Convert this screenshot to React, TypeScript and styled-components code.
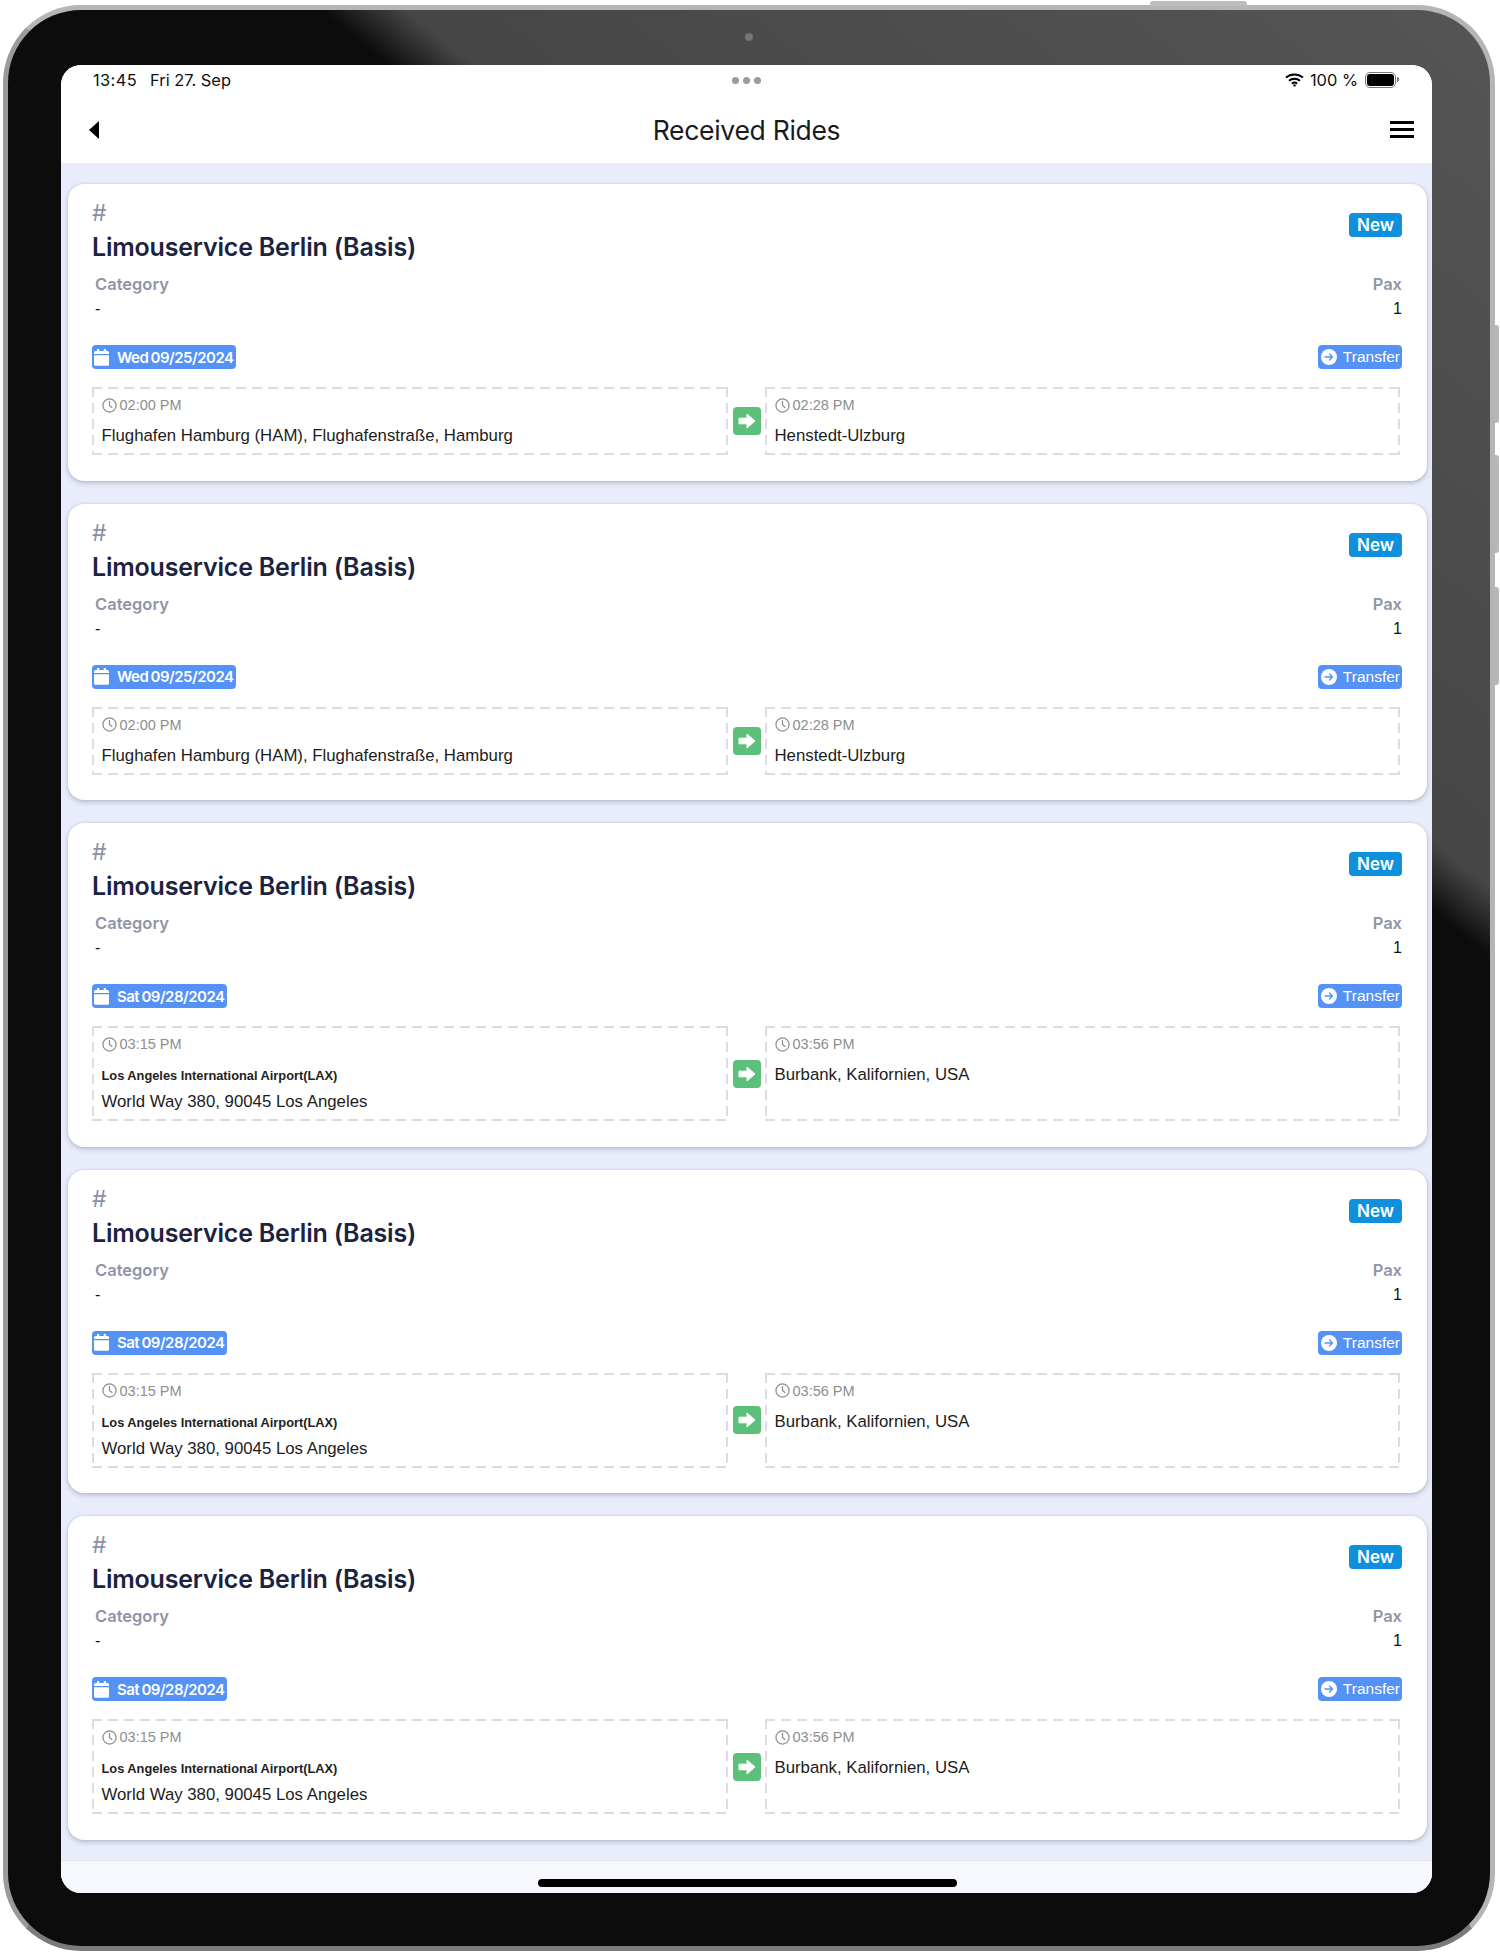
import React from "react";
import styled, { createGlobalStyle } from "styled-components";

const GlobalStyle = createGlobalStyle`
  html, body {
    margin: 0;
    padding: 0;
    background: #ffffff;
  }
  body {
    font-family: "Liberation Sans", Arial, sans-serif;
    color: #111111;
  }
`;

type Ride = {
  date: string;
  fromTime: string;
  toTime: string;
  fromName?: string;
  fromAddress: string;
  to: string;
};

const hamburg: Ride = {
  date: "Wed 09/25/2024",
  fromTime: "02:00 PM",
  toTime: "02:28 PM",
  fromAddress: "Flughafen Hamburg (HAM), Flughafenstraße, Hamburg",
  to: "Henstedt-Ulzburg",
};

const losAngeles: Ride = {
  date: "Sat 09/28/2024",
  fromTime: "03:15 PM",
  toTime: "03:56 PM",
  fromName: "Los Angeles International Airport(LAX)",
  fromAddress: "World Way 380, 90045 Los Angeles",
  to: "Burbank, Kalifornien, USA",
};

const rides: Ride[] = [hamburg, hamburg, losAngeles, losAngeles, losAngeles];

const ClockIcon = () => (
  <svg width="15" height="15" viewBox="0 0 24 24" fill="none" stroke="#8d8d8d" strokeWidth="2" strokeLinecap="round" strokeLinejoin="round">
    <circle cx="12" cy="12" r="10.5" />
    <path d="M12 5.5V12l4 3" />
  </svg>
);

const CalendarIcon = () => (
  <svg width="15" height="17" viewBox="0 0 15 17" fill="#ffffff">
    <rect x="3" y="0" width="2.2" height="3.5" rx="0.6" />
    <rect x="9.8" y="0" width="2.2" height="3.5" rx="0.6" />
    <path d="M1.5 2H13.5A1.5 1.5 0 0 1 15 3.5V5H0V3.5A1.5 1.5 0 0 1 1.5 2Z" />
    <path d="M0 6.2H15V15.2A1.5 1.5 0 0 1 13.5 16.7H1.5A1.5 1.5 0 0 1 0 15.2Z" />
  </svg>
);

const TransferIcon = () => (
  <svg width="16" height="16" viewBox="0 0 16 16">
    <circle cx="8" cy="8" r="8" fill="#ffffff" />
    <path d="M4 8H11.5M8.5 5L11.5 8L8.5 11" fill="none" stroke="#5592f5" strokeWidth="1.3" strokeLinecap="round" strokeLinejoin="round" />
  </svg>
);

const WifiIcon = () => (
  <svg width="19" height="14" viewBox="0 0 19 14" fill="none" stroke="#000000" strokeWidth="2" strokeLinecap="butt">
    <path d="M1 4.6C5.8 0.4 13.2 0.4 18 4.6" />
    <path d="M4 7.8C7.2 5 11.8 5 15 7.8" />
    <path d="M6.9 10.6C8.4 9.4 10.6 9.4 12.1 10.6" />
    <circle cx="9.5" cy="12.4" r="1.2" fill="#000000" stroke="none" />
  </svg>
);

const Page = styled.div`
  width: 1500px;
  height: 1953px;
  box-sizing: border-box;
  padding: 5px 5px 2px 3px;
  overflow: hidden;
`;

const Device = styled.div`
  position: relative;
  width: 100%;
  height: 100%;
  box-sizing: border-box;
  padding: 55px 58px 53px 53px;
  border: 5px solid #b5b5b5;
  border-bottom-color: #7b7b7b;
  border-left-color: #9a9a9a;
  border-radius: 78px;
  background: linear-gradient(39deg, #0c0c0c 69.8%, #464646 72%, #555555 100%);
`;

const TopButton = styled.div`
  position: absolute;
  top: -9px;
  right: 243px;
  width: 97px;
  height: 5px;
  border-radius: 3px 3px 0 0;
  background: #bdbdbd;
`;

const SideButton = styled.div<{ $top: number }>`
  position: absolute;
  top: ${(p) => p.$top}px;
  right: -9px;
  width: 4px;
  height: 98px;
  border-radius: 0 3px 3px 0;
  background: #b8b8b8;
`;

const Camera = styled.div`
  position: absolute;
  top: 23px;
  left: 737px;
  width: 8px;
  height: 8px;
  border-radius: 50%;
  background: #73737c;
`;

const Screen = styled.div`
  display: flex;
  flex-direction: column;
  height: 100%;
  border-radius: 20px;
  overflow: hidden;
  background: #e9ecfa;
`;

const StatusBar = styled.div`
  display: grid;
  grid-template-columns: 1fr auto 1fr;
  align-items: center;
  height: 30px;
  padding: 0 33px 0 32px;
  background: #ffffff;
  font-family: "Inter", sans-serif;
  font-size: 16.4px;
  color: #111111;
`;

const StatusLeft = styled.div`
  display: flex;
  gap: 13px;
`;

const StatusClock = styled.span`
  letter-spacing: 0.4px;
`;

const StatusDots = styled.div`
  display: flex;
  gap: 4px;
`;

const Dot = styled.span`
  width: 7px;
  height: 7px;
  border-radius: 50%;
  background: #9a9a9e;
`;

const StatusRight = styled.div`
  display: flex;
  justify-content: flex-end;
  align-items: center;
  gap: 6px;
`;

const Battery = styled.div`
  position: relative;
  width: 27px;
  height: 12px;
  margin-left: 1px;
  margin-right: 3px;
  padding: 1px;
  box-sizing: content-box;
  border: 1px solid #777777;
  border-radius: 5px;
  &::before {
    content: "";
    display: block;
    height: 100%;
    border-radius: 3px;
    background: #000000;
  }
  &::after {
    content: "";
    position: absolute;
    top: 4px;
    right: -4px;
    width: 2px;
    height: 5px;
    border-radius: 0 2px 2px 0;
    background: #777777;
  }
`;

const NavBar = styled.div`
  display: grid;
  grid-template-columns: 1fr auto 1fr;
  align-items: center;
  height: 68px;
  box-sizing: border-box;
  padding: 1px 18px 0 18px;
  background: #ffffff;
`;

const BackIcon = styled.div`
  width: 0;
  height: 0;
  margin-left: 10px;
  border-style: solid;
  border-width: 9.5px 10px 9.5px 0;
  border-color: transparent #000000 transparent transparent;
`;

const NavTitle = styled.h1`
  margin: 0;
  font-family: "Inter", sans-serif;
  font-size: 26.5px;
  font-weight: 400;
  letter-spacing: -0.3px;
  color: #1a1a1f;
`;

const Burger = styled.div`
  justify-self: end;
  width: 24px;
  height: 17px;
  border-top: 3px solid #000000;
  border-bottom: 3px solid #000000;
  box-sizing: border-box;
  position: relative;
  &::after {
    content: "";
    position: absolute;
    top: 4px;
    left: 0;
    right: 0;
    height: 3px;
    background: #000000;
  }
`;

const List = styled.div`
  flex: 1;
  display: flex;
  flex-direction: column;
  gap: 23px;
  padding: 21px 5px 0 7px;
  overflow: hidden;
`;

const Card = styled.div`
  flex: none;
  box-sizing: border-box;
  padding: 16px 25px 25.5px 24px;
  border-radius: 16px;
  background: #ffffff;
  box-shadow: 0 2px 5px rgba(90, 95, 130, 0.35), 0 0 2px rgba(90, 95, 130, 0.18);
`;

const Footer = styled.div`
  flex: none;
  height: 32px;
  position: relative;
  background: #f7f8fd;
  box-shadow: 0 -1px 0 #e4e5ee;
`;

const HomeBar = styled.div`
  position: absolute;
  left: 477px;
  bottom: 6px;
  width: 419px;
  height: 8px;
  border-radius: 4px;
  background: #000000;
`;

const HeadRow = styled.div`
  display: flex;
  justify-content: space-between;
  align-items: flex-start;
`;

const Hash = styled.div`
  font-family: "Inter", sans-serif;
  font-size: 23px;
  line-height: 26px;
  color: #8d90a8;
`;

const Title = styled.div`
  margin-top: 5px;
  font-family: "Inter", sans-serif;
  font-size: 25px;
  line-height: 33px;
  font-weight: 600;
  letter-spacing: -0.2px;
  color: #1b2340;
`;

const NewBadge = styled.div`
  margin-top: 13px;
  padding: 0 8px;
  height: 24px;
  line-height: 24px;
  border-radius: 4px;
  background: #0f90dc;
  color: #ffffff;
  font-family: "Inter", sans-serif;
  font-size: 17px;
  font-weight: 600;
`;

const MetaRow = styled.div`
  display: flex;
  justify-content: space-between;
  margin-top: 10px;
  padding-left: 3px;
`;

const MetaColumn = styled.div<{ $end?: boolean }>`
  display: flex;
  flex-direction: column;
  gap: 3px;
  align-items: ${(p) => (p.$end ? "flex-end" : "flex-start")};
`;

const MetaLabel = styled.div`
  font-family: "Inter", sans-serif;
  font-size: 16.5px;
  line-height: 21px;
  font-weight: 600;
  color: #9194a8;
`;

const MetaValue = styled.div`
  font-size: 16px;
  line-height: 21px;
  color: #111111;
`;

const TagRow = styled.div`
  display: flex;
  justify-content: space-between;
  margin-top: 26px;
`;

const Tag = styled.div`
  display: flex;
  align-items: center;
  height: 24px;
  padding: 0 2px 0 3px;
  gap: 6px;
  border-radius: 4px;
  background: #5592f5;
  color: #ffffff;
  font-size: 15.5px;
`;

const DateTag = styled(Tag)`
  padding: 0 2px 0 2px;
  gap: 8px;
  font-family: "Inter", sans-serif;
  font-size: 15px;
  font-weight: 600;
  letter-spacing: -0.5px;
  word-spacing: -1px;
`;

const RouteRow = styled.div`
  display: grid;
  grid-template-columns: 636px 37px 1fr;
  margin-top: 18px;
  padding-right: 2px;
`;

const Stop = styled.div`
  min-height: 68px;
  box-sizing: border-box;
  padding: 9px 9px 9px 9.5px;
  background-image: linear-gradient(to right, #dcdce2 10px, transparent 10px),
    linear-gradient(to right, #dcdce2 10px, transparent 10px),
    linear-gradient(to bottom, #dcdce2 10px, transparent 10px),
    linear-gradient(to bottom, #dcdce2 10px, transparent 10px);
  background-size: 16px 2px, 16px 2px, 2px 16px, 2px 16px;
  background-position: 0 0, 0 100%, 0 0, 100% 0;
  background-repeat: repeat-x, repeat-x, repeat-y, repeat-y;
`;

const StopTime = styled.div`
  display: flex;
  align-items: center;
  gap: 3px;
  height: 18px;
  font-size: 14.5px;
  color: #8d8d8d;
`;

const StopName = styled.div`
  margin-top: 14px;
  font-size: 12.8px;
  line-height: 18px;
  font-weight: 700;
  color: #222222;
`;

const StopAddress = styled.div<{ $tight?: boolean }>`
  margin-top: ${(p) => (p.$tight ? 6 : 11)}px;
  font-size: 16.8px;
  line-height: 21px;
  color: #1c1c1c;
`;

const ArrowCell = styled.div`
  display: flex;
  align-items: center;
  justify-content: center;
`;

const ArrowBox = styled.div`
  display: flex;
  align-items: center;
  justify-content: center;
  width: 28px;
  height: 28px;
  border-radius: 4px;
  background: #5cc07a;
`;

const RideCard = ({ ride }: { ride: Ride }) => (
  <Card>
    <HeadRow>
      <div>
        <Hash>#</Hash>
        <Title>Limouservice Berlin (Basis)</Title>
      </div>
      <NewBadge>New</NewBadge>
    </HeadRow>
    <MetaRow>
      <MetaColumn>
        <MetaLabel>Category</MetaLabel>
        <MetaValue>-</MetaValue>
      </MetaColumn>
      <MetaColumn $end>
        <MetaLabel>Pax</MetaLabel>
        <MetaValue>1</MetaValue>
      </MetaColumn>
    </MetaRow>
    <TagRow>
      <DateTag>
        <CalendarIcon />
        {ride.date}
      </DateTag>
      <Tag>
        <TransferIcon />
        Transfer
      </Tag>
    </TagRow>
    <RouteRow>
      <Stop>
        <StopTime>
          <ClockIcon />
          {ride.fromTime}
        </StopTime>
        {ride.fromName && <StopName>{ride.fromName}</StopName>}
        <StopAddress $tight={!!ride.fromName}>{ride.fromAddress}</StopAddress>
      </Stop>
      <ArrowCell>
        <ArrowBox>
          <svg width="18" height="16" viewBox="0 0 18 16" fill="#ffffff">
            <path d="M1 5.2H9V1L17 8L9 15V10.8H1Z" stroke="#ffffff" strokeWidth="1" strokeLinejoin="round" />
          </svg>
        </ArrowBox>
      </ArrowCell>
      <Stop>
        <StopTime>
          <ClockIcon />
          {ride.toTime}
        </StopTime>
        <StopAddress>{ride.to}</StopAddress>
      </Stop>
    </RouteRow>
  </Card>
);

const App = () => (
  <Page>
    <GlobalStyle />
    <Device>
      <TopButton />
      <SideButton $top={315} />
      <SideButton $top={445} />
      <SideButton $top={577} />
      <Camera />
      <Screen>
        <StatusBar>
          <StatusLeft>
            <StatusClock>13:45</StatusClock>
            <span>Fri 27. Sep</span>
          </StatusLeft>
          <StatusDots>
            <Dot />
            <Dot />
            <Dot />
          </StatusDots>
          <StatusRight>
            <WifiIcon />
            <span>100 %</span>
            <Battery />
          </StatusRight>
        </StatusBar>
        <NavBar>
          <BackIcon />
          <NavTitle>Received Rides</NavTitle>
          <Burger />
        </NavBar>
        <List>
          {rides.map((ride, i) => (
            <RideCard key={i} ride={ride} />
          ))}
        </List>
        <Footer>
          <HomeBar />
        </Footer>
      </Screen>
    </Device>
  </Page>
);

export default App;
